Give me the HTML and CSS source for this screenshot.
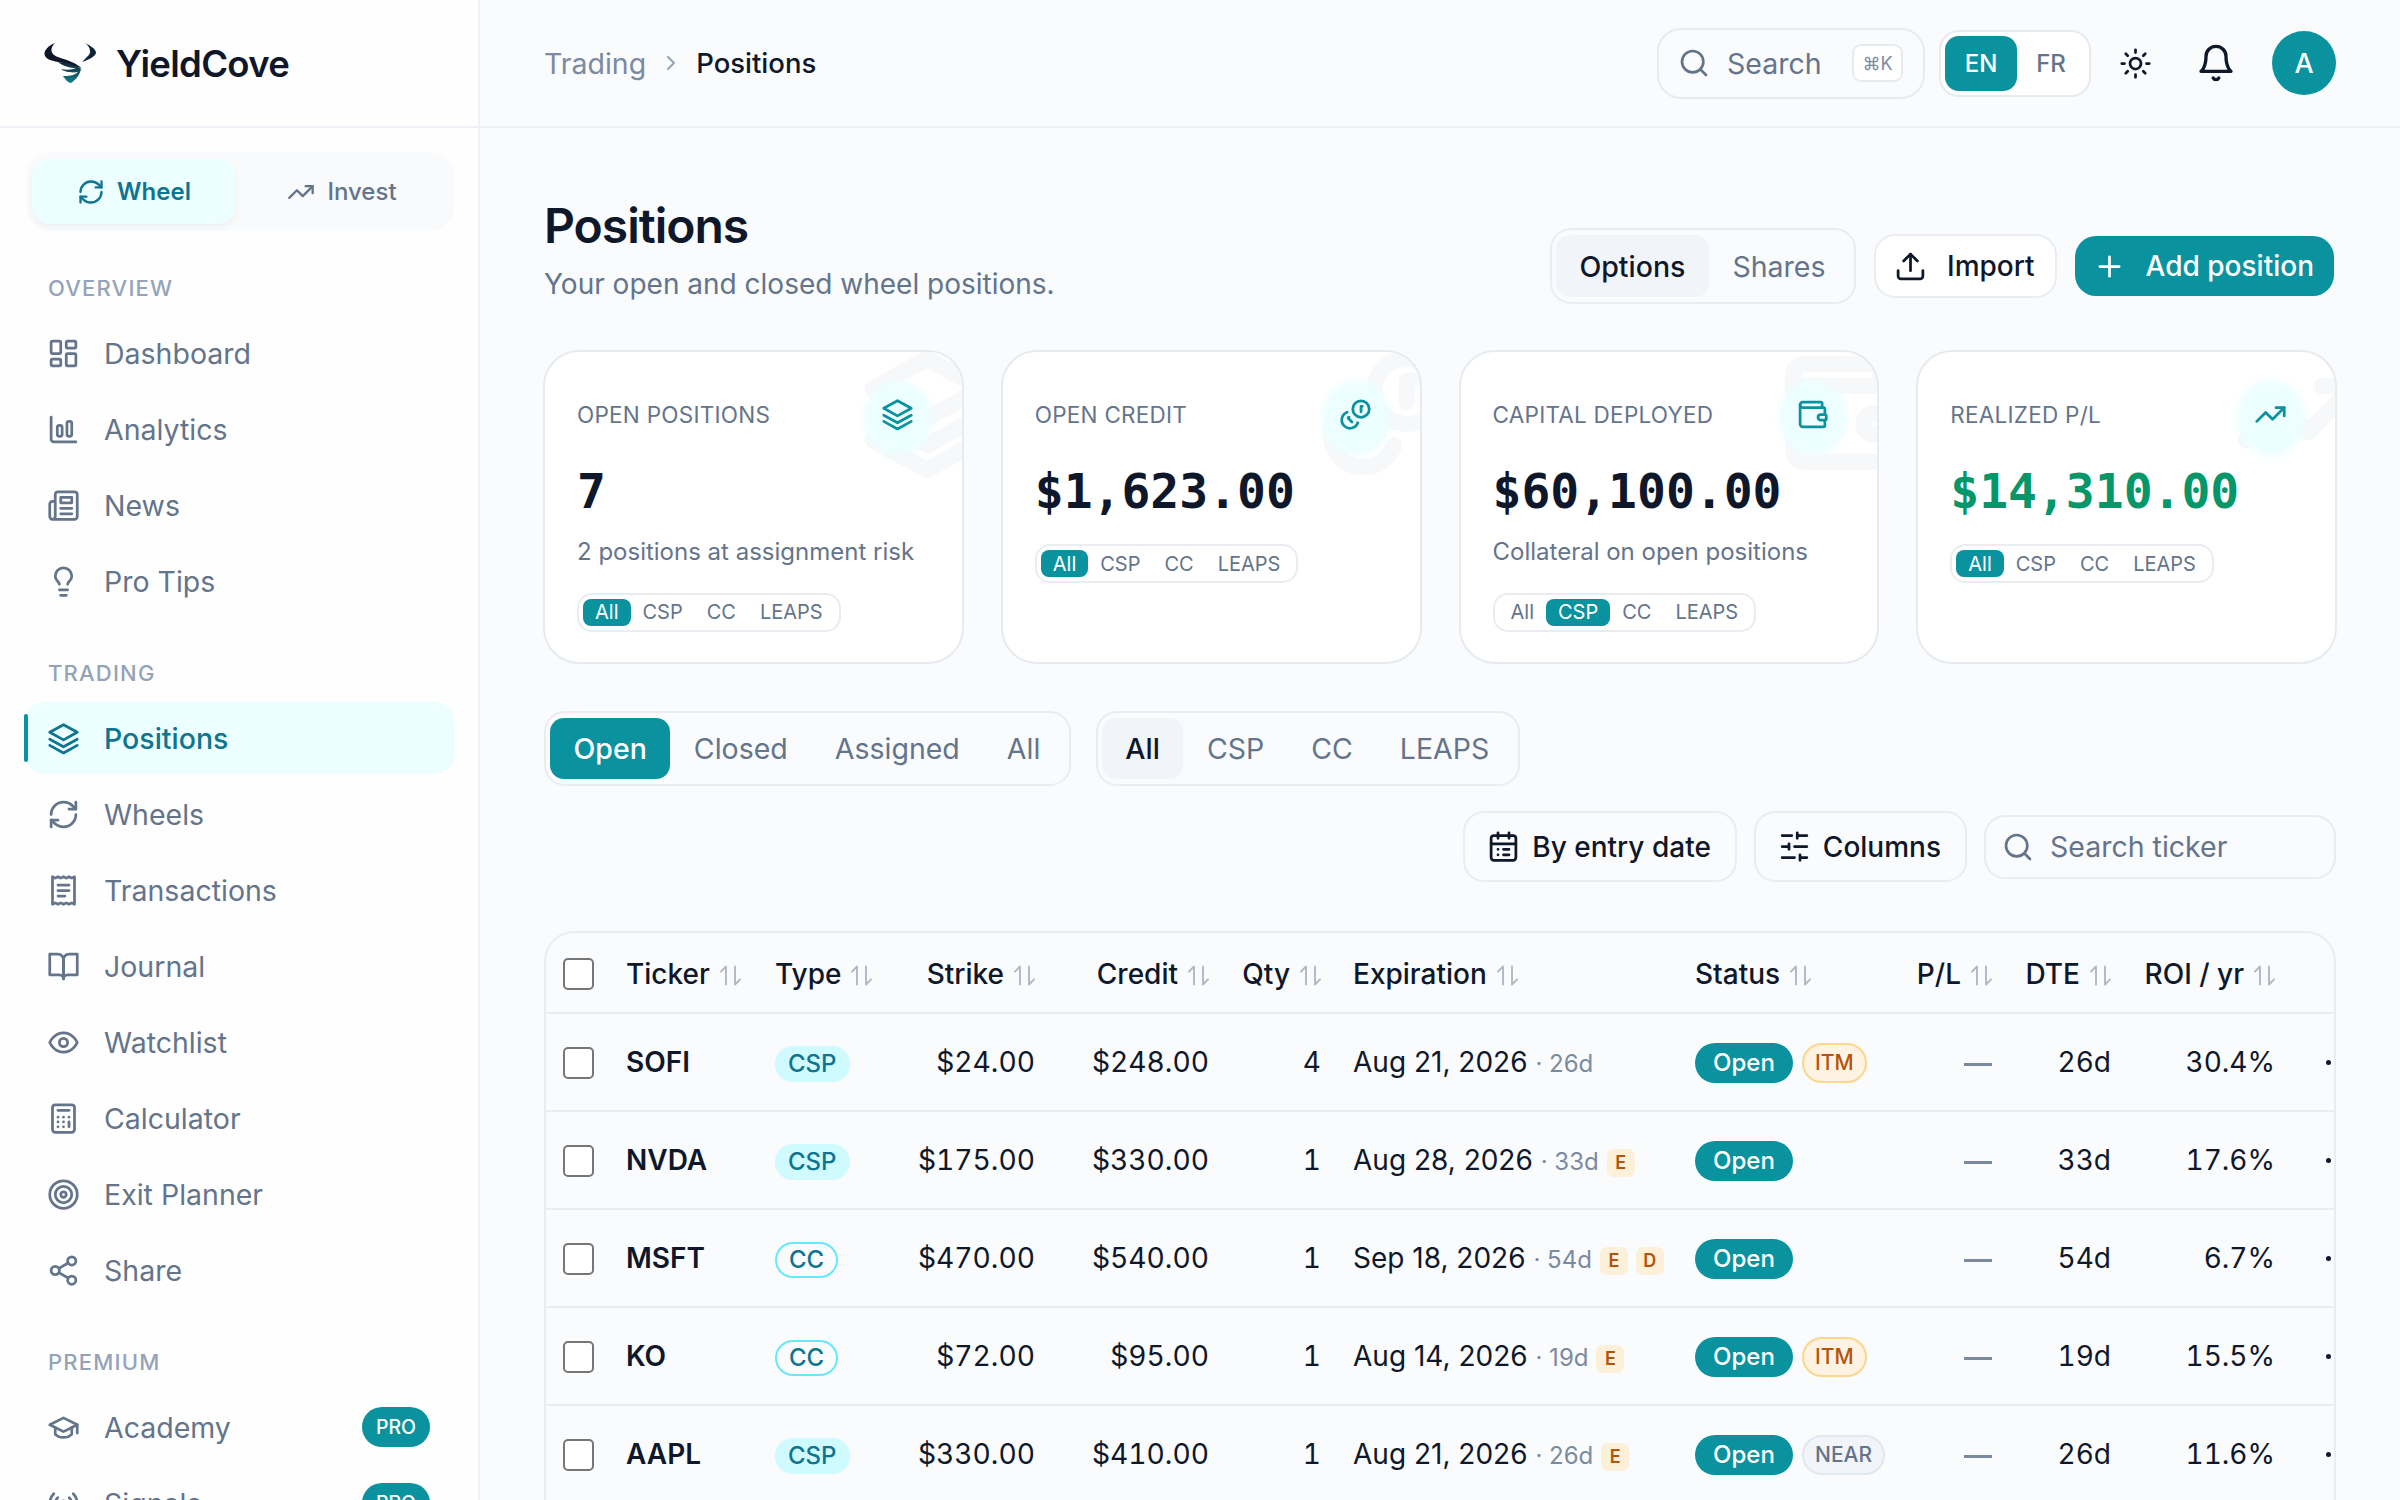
FILE: index.html
```html
<!DOCTYPE html>
<html lang="en">

<head>
    <meta charset="UTF-8">
    <title>Positions - YieldCove</title>
    <link rel="stylesheet" href="styles.css">
</head>

<body>
    <svg class="sprite" xmlns="http://www.w3.org/2000/svg">
        <symbol id="i-refresh" viewBox="0 0 24 24"><path d="M3 12a9 9 0 0 1 9-9 9.75 9.75 0 0 1 6.74 2.74L21 8"/><path d="M21 3v5h-5"/><path d="M21 12a9 9 0 0 1-9 9 9.75 9.75 0 0 1-6.74-2.74L3 16"/><path d="M8 16H3v5"/></symbol>
        <symbol id="i-trend" viewBox="0 0 24 24"><path d="M2 17l6.5-6.5 5 5L22 7"/><path d="M16 7h6v6"/></symbol>
        <symbol id="i-dashboard" viewBox="0 0 24 24"><rect x="3" y="3" width="7" height="9" rx="1"/><rect x="14" y="3" width="7" height="5" rx="1"/><rect x="14" y="12" width="7" height="9" rx="1"/><rect x="3" y="16" width="7" height="5" rx="1"/></symbol>
        <symbol id="i-analytics" viewBox="0 0 24 24"><path d="M3 3v16a2 2 0 0 0 2 2h16"/><rect x="7.5" y="9" width="3.5" height="8" rx="1.5"/><rect x="14.5" y="6" width="3.5" height="11" rx="1.5"/></symbol>
        <symbol id="i-news" viewBox="0 0 24 24"><path d="M4 22h16a2 2 0 0 0 2-2V4a2 2 0 0 0-2-2H8a2 2 0 0 0-2 2v16a2 2 0 0 1-2 2Zm0 0a2 2 0 0 1-2-2v-9c0-1.1.9-2 2-2h2"/><path d="M18 14h-8"/><path d="M18 18h-8"/><path d="M10 6h8v4h-8V6Z"/></symbol>
        <symbol id="i-bulb" viewBox="0 0 24 24"><path d="M15 14c.2-1 .7-1.7 1.5-2.5 1-.9 1.5-2.2 1.5-3.5A6 6 0 0 0 6 8c0 1 .2 2.2 1.5 3.5.7.7 1.3 1.5 1.5 2.5"/><path d="M9 18h6"/><path d="M10 22h4"/></symbol>
        <symbol id="i-layers" viewBox="0 0 24 24"><path d="M12 2 2 7.5 12 13l10-5.500z"/><path d="M2 12.500 12 18l10-5.500"/><path d="M2 17l10 5.500L22 17"/></symbol>
        <symbol id="i-receipt" viewBox="0 0 24 24"><path d="M4 2v20l2-1 2 1 2-1 2 1 2-1 2 1 2-1 2 1V2l-2 1-2-1-2 1-2-1-2 1-2-1-2 1Z"/><path d="M8 8h8"/><path d="M8 12h8"/><path d="M8 16h5"/></symbol>
        <symbol id="i-book" viewBox="0 0 24 24"><path d="M2 3h6a4 4 0 0 1 4 4v14a3 3 0 0 0-3-3H2z"/><path d="M22 3h-6a4 4 0 0 0-4 4v14a3 3 0 0 1 3-3h7z"/></symbol>
        <symbol id="i-eye" viewBox="0 0 24 24"><path d="M2 12s3-7 10-7 10 7 10 7-3 7-10 7-10-7-10-7Z"/><circle cx="12" cy="12" r="3"/></symbol>
        <symbol id="i-calc" viewBox="0 0 24 24"><rect x="4" y="2" width="16" height="20" rx="2"/><path d="M8 6h8"/><path d="M8 11h.01M12 11h.01M16 11h.01M8 14.500h.01M12 14.500h.01M8 18h.01M12 18h.01"/><path d="M16 14.500V18"/></symbol>
        <symbol id="i-target" viewBox="0 0 24 24"><circle cx="12" cy="12" r="10"/><circle cx="12" cy="12" r="6"/><circle cx="12" cy="12" r="2"/></symbol>
        <symbol id="i-share" viewBox="0 0 24 24"><circle cx="18" cy="5" r="3"/><circle cx="6" cy="12" r="3"/><circle cx="18" cy="19" r="3"/><path d="M8.590 13.510l6.830 3.980"/><path d="M15.410 6.510l-6.820 3.980"/></symbol>
        <symbol id="i-cap" viewBox="0 0 24 24"><path d="M22 10v6"/><path d="M2 10l10-5 10 5-10 5z"/><path d="M6 12v5c3 3 9 3 12 0v-5"/></symbol>
        <symbol id="i-radio" viewBox="0 0 24 24"><path d="M4.900 19.100C1 15.200 1 8.800 4.900 4.900"/><path d="M7.800 16.200c-2.300-2.300-2.300-6.100 0-8.500"/><circle cx="12" cy="12" r="2"/><path d="M16.200 7.800c2.300 2.300 2.300 6.100 0 8.500"/><path d="M19.100 4.900C23 8.800 23 15.100 19.100 19"/></symbol>
        <symbol id="i-search" viewBox="0 0 24 24"><circle cx="11" cy="11" r="8"/><path d="M21 21l-4.300-4.300"/></symbol>
        <symbol id="i-chevron" viewBox="0 0 24 24"><path d="M9 18l6-6-6-6"/></symbol>
        <symbol id="i-sun" viewBox="0 0 24 24"><circle cx="12" cy="12" r="4"/><path d="M12 2v2M12 20v2M4.930 4.930l1.410 1.410M17.660 17.660l1.410 1.410M2 12h2M20 12h2M6.340 17.660l-1.410 1.410M19.070 4.930l-1.410 1.410"/></symbol>
        <symbol id="i-bell" viewBox="0 0 24 24"><path d="M6 8a6 6 0 0 1 12 0c0 7 3 9 3 9H3s3-2 3-9"/><path d="M10.300 21a1.940 1.940 0 0 0 3.400 0"/></symbol>
        <symbol id="i-upload" viewBox="0 0 24 24"><path d="M21 15v4a2 2 0 0 1-2 2H5a2 2 0 0 1-2-2v-4"/><path d="M17 8l-5-5-5 5"/><path d="M12 3v12"/></symbol>
        <symbol id="i-plus" viewBox="0 0 24 24"><path d="M5 12h14"/><path d="M12 5v14"/></symbol>
        <symbol id="i-calendar" viewBox="0 0 24 24"><rect x="3" y="4" width="18" height="18" rx="2"/><path d="M16 2v4M8 2v4M3 10h18"/><path d="M8 14h.01M12 14h4M8 18h.01M12 18h4"/></symbol>
        <symbol id="i-sliders" viewBox="0 0 24 24"><path d="M21 4h-7M10 4H3M21 12h-9M8 12H3M21 20h-5M12 20H3M14 2v4M8 10v4M16 18v4"/></symbol>
        <symbol id="i-coins" viewBox="0 0 24 24"><circle cx="16" cy="8" r="6"/><path d="M5.910 10.370A6 6 0 1 0 13.660 18"/><path d="M17 6h-1v4"/><path d="M7.290 13.880l-.7.710 2.820 2.820"/></symbol>
        <symbol id="i-wallet" viewBox="0 0 24 24"><path d="M19 7V4a1 1 0 0 0-1-1H5a2 2 0 0 0 0 4h15a1 1 0 0 1 1 1v4h-3a2 2 0 0 0 0 4h3a1 1 0 0 0 1-1v-2a1 1 0 0 0-1-1"/><path d="M3 5v14a2 2 0 0 0 2 2h15a1 1 0 0 0 1-1v-4"/></symbol>
        <symbol id="i-sort" viewBox="0 0 24 24"><path d="M8 20V4L3.500 8.500"/><path d="M16 4v16l4.500-4.500"/></symbol>
    </svg>

    <div class="app">
        <aside class="sidebar">
            <div class="brand">
                <svg class="logo" viewBox="0 0 52 40">
                    <defs>
                        <linearGradient id="logohead" x1="0" y1="0" x2="0" y2="1">
                            <stop offset="0" stop-color="#0f2338"/>
                            <stop offset="1" stop-color="#12808c"/>
                        </linearGradient>
                    </defs>
                    <path fill="#0f172a" d="M11 0C3 3-1 9 1 13c3 6 15 5 29 10 4 1 8 2 9 4-5-7-17-10-25-13C7 12 5 6 11 0Z"/>
                    <path fill="#0f2338" d="M41 0c6 3 11 6 11 10-1 4-8 7-14 9 5-5 9-8 8-11 0-3-2-6-5-8Z"/>
                    <path fill="url(#logohead)" d="M14 19c8 1 18 3 23 7-1 5-4 10-10 14-3 0-6-4-8-7 5 0 11 0 15-4-6 1-14 0-17-3 5 1 11 1 15-1-6 0-13-2-18-6Z"/>
                </svg>
                <span class="brandname">YieldCove</span>
            </div>

            <div class="modeswitch">
                <a class="modebtn modeactive"><svg class="ico modeico"><use href="#i-refresh"/></svg>Wheel</a>
                <a class="modebtn"><svg class="ico modeico"><use href="#i-trend"/></svg>Invest</a>
            </div>

            <div class="navlabel">OVERVIEW</div>
            <nav class="navgroup">
                <a class="navitem"><svg class="ico navico"><use href="#i-dashboard"/></svg>Dashboard</a>
                <a class="navitem"><svg class="ico navico"><use href="#i-analytics"/></svg>Analytics</a>
                <a class="navitem"><svg class="ico navico"><use href="#i-news"/></svg>News</a>
                <a class="navitem"><svg class="ico navico"><use href="#i-bulb"/></svg>Pro Tips</a>
            </nav>

            <div class="navlabel">TRADING</div>
            <nav class="navgroup">
                <a class="navitem navactive"><svg class="ico navico"><use href="#i-layers"/></svg>Positions</a>
                <a class="navitem"><svg class="ico navico"><use href="#i-refresh"/></svg>Wheels</a>
                <a class="navitem"><svg class="ico navico"><use href="#i-receipt"/></svg>Transactions</a>
                <a class="navitem"><svg class="ico navico"><use href="#i-book"/></svg>Journal</a>
                <a class="navitem"><svg class="ico navico"><use href="#i-eye"/></svg>Watchlist</a>
                <a class="navitem"><svg class="ico navico"><use href="#i-calc"/></svg>Calculator</a>
                <a class="navitem"><svg class="ico navico"><use href="#i-target"/></svg>Exit Planner</a>
                <a class="navitem"><svg class="ico navico"><use href="#i-share"/></svg>Share</a>
            </nav>

            <div class="navlabel">PREMIUM</div>
            <nav class="navgroup">
                <a class="navitem"><svg class="ico navico"><use href="#i-cap"/></svg>Academy<span class="probadge">PRO</span></a>
                <a class="navitem"><svg class="ico navico"><use href="#i-radio"/></svg>Signals<span class="probadge">PRO</span></a>
            </nav>
        </aside>

        <div class="mainarea">
            <header class="topbar">
                <div class="crumbs">
                    <span class="crumbmuted">Trading</span>
                    <svg class="ico crumbico"><use href="#i-chevron"/></svg>
                    <span class="crumbcurrent">Positions</span>
                </div>
                <div class="toptools">
                    <div class="topsearch">
                        <svg class="ico searchico"><use href="#i-search"/></svg>
                        <span class="topsearchtext">Search</span>
                        <span class="kbd">⌘K</span>
                    </div>
                    <div class="langswitch">
                        <span class="langbtn langactive">EN</span>
                        <span class="langbtn">FR</span>
                    </div>
                    <svg class="ico sunico"><use href="#i-sun"/></svg>
                    <svg class="ico bellico"><use href="#i-bell"/></svg>
                    <div class="avatar">A</div>
                </div>
            </header>

            <main class="content">
                <div class="pagehead">
                    <div>
                        <h1 class="pagetitle">Positions</h1>
                        <p class="pagesub">Your open and closed wheel positions.</p>
                    </div>
                    <div class="pageactions">
                        <div class="seg kindseg">
                            <span class="segbtn segsoft">Options</span>
                            <span class="segbtn">Shares</span>
                        </div>
                        <a class="btn importbtn"><svg class="ico btnico"><use href="#i-upload"/></svg>Import</a>
                        <a class="btn addbtn"><svg class="ico btnico"><use href="#i-plus"/></svg>Add position</a>
                    </div>
                </div>

                <section class="statgrid">
                    <div class="statcard">
                        <svg class="ico watermark"><use href="#i-layers"/></svg>
                        <div class="bubble"></div>
                        <svg class="ico statico"><use href="#i-layers"/></svg>
                        <div class="statlabel">OPEN POSITIONS</div>
                        <div class="statvalue">7</div>
                        <div class="statsub">2 positions at assignment risk</div>
                        <div class="minipill"><span class="minibtn miniactive">All</span><span class="minibtn">CSP</span><span class="minibtn">CC</span><span class="minibtn">LEAPS</span></div>
                    </div>
                    <div class="statcard">
                        <svg class="ico watermark"><use href="#i-coins"/></svg>
                        <div class="bubble"></div>
                        <svg class="ico statico"><use href="#i-coins"/></svg>
                        <div class="statlabel">OPEN CREDIT</div>
                        <div class="statvalue">$1,623.00</div>
                        <div class="minipill"><span class="minibtn miniactive">All</span><span class="minibtn">CSP</span><span class="minibtn">CC</span><span class="minibtn">LEAPS</span></div>
                    </div>
                    <div class="statcard">
                        <svg class="ico watermark"><use href="#i-wallet"/></svg>
                        <div class="bubble"></div>
                        <svg class="ico statico"><use href="#i-wallet"/></svg>
                        <div class="statlabel">CAPITAL DEPLOYED</div>
                        <div class="statvalue">$60,100.00</div>
                        <div class="statsub">Collateral on open positions</div>
                        <div class="minipill"><span class="minibtn">All</span><span class="minibtn miniactive">CSP</span><span class="minibtn">CC</span><span class="minibtn">LEAPS</span></div>
                    </div>
                    <div class="statcard">
                        <svg class="ico watermark"><use href="#i-trend"/></svg>
                        <div class="bubble"></div>
                        <svg class="ico statico"><use href="#i-trend"/></svg>
                        <div class="statlabel">REALIZED P/L</div>
                        <div class="statvalue statgreen">$14,310.00</div>
                        <div class="minipill"><span class="minibtn miniactive">All</span><span class="minibtn">CSP</span><span class="minibtn">CC</span><span class="minibtn">LEAPS</span></div>
                    </div>
                </section>

                <div class="filterrow">
                    <div class="seg">
                        <span class="segbtn segteal">Open</span>
                        <span class="segbtn">Closed</span>
                        <span class="segbtn">Assigned</span>
                        <span class="segbtn">All</span>
                    </div>
                    <div class="seg">
                        <span class="segbtn segsoft">All</span>
                        <span class="segbtn">CSP</span>
                        <span class="segbtn">CC</span>
                        <span class="segbtn">LEAPS</span>
                    </div>
                </div>

                <div class="toolrow">
                    <a class="btn toolbtn"><svg class="ico btnico"><use href="#i-calendar"/></svg>By entry date</a>
                    <a class="btn toolbtn"><svg class="ico btnico"><use href="#i-sliders"/></svg>Columns</a>
                    <div class="tickersearch"><svg class="ico searchico"><use href="#i-search"/></svg>Search ticker</div>
                </div>

                <div class="tablewrap">
                    <table class="postable">
                        <colgroup>
                            <col class="colcheck"><col class="colticker"><col class="coltype"><col class="colstrike"><col class="colcredit"><col class="colqty"><col class="colexp"><col class="colstatus"><col class="colpl"><col class="coldte"><col class="colroi"><col class="colmore">
                        </colgroup>
                        <thead>
                            <tr>
                                <th><span class="check"></span></th>
                                <th>Ticker<svg class="ico sortico"><use href="#i-sort"/></svg></th>
                                <th>Type<svg class="ico sortico"><use href="#i-sort"/></svg></th>
                                <th class="num">Strike<svg class="ico sortico"><use href="#i-sort"/></svg></th>
                                <th class="num">Credit<svg class="ico sortico"><use href="#i-sort"/></svg></th>
                                <th class="num">Qty<svg class="ico sortico"><use href="#i-sort"/></svg></th>
                                <th>Expiration<svg class="ico sortico"><use href="#i-sort"/></svg></th>
                                <th>Status<svg class="ico sortico"><use href="#i-sort"/></svg></th>
                                <th class="num">P/L<svg class="ico sortico"><use href="#i-sort"/></svg></th>
                                <th class="num">DTE<svg class="ico sortico"><use href="#i-sort"/></svg></th>
                                <th class="num">ROI / yr<svg class="ico sortico"><use href="#i-sort"/></svg></th>
                                <th></th>
                            </tr>
                        </thead>
                        <tbody>
                            <tr>
                                <td><span class="check"></span></td>
                                <td class="ticker">SOFI</td>
                                <td><span class="kind kindcsp">CSP</span></td>
                                <td class="num money">$24.00</td>
                                <td class="num money">$248.00</td>
                                <td class="num">4</td>
                                <td>Aug 21, 2026 <span class="dtemeta">· 26d</span></td>
                                <td><span class="status">Open</span><span class="flag flagitm">ITM</span></td>
                                <td class="num"><span class="dash"></span></td>
                                <td class="num">26d</td>
                                <td class="num">30.4%</td>
                                <td class="more"><span class="moredot"></span></td>
                            </tr>
                            <tr>
                                <td><span class="check"></span></td>
                                <td class="ticker">NVDA</td>
                                <td><span class="kind kindcsp">CSP</span></td>
                                <td class="num money">$175.00</td>
                                <td class="num money">$330.00</td>
                                <td class="num">1</td>
                                <td>Aug 28, 2026 <span class="dtemeta">· 33d</span><span class="evchip">E</span></td>
                                <td><span class="status">Open</span></td>
                                <td class="num"><span class="dash"></span></td>
                                <td class="num">33d</td>
                                <td class="num">17.6%</td>
                                <td class="more"><span class="moredot"></span></td>
                            </tr>
                            <tr>
                                <td><span class="check"></span></td>
                                <td class="ticker">MSFT</td>
                                <td><span class="kind kindcc">CC</span></td>
                                <td class="num money">$470.00</td>
                                <td class="num money">$540.00</td>
                                <td class="num">1</td>
                                <td>Sep 18, 2026 <span class="dtemeta">· 54d</span><span class="evchip">E</span><span class="evchip">D</span></td>
                                <td><span class="status">Open</span></td>
                                <td class="num"><span class="dash"></span></td>
                                <td class="num">54d</td>
                                <td class="num">6.7%</td>
                                <td class="more"><span class="moredot"></span></td>
                            </tr>
                            <tr>
                                <td><span class="check"></span></td>
                                <td class="ticker">KO</td>
                                <td><span class="kind kindcc">CC</span></td>
                                <td class="num money">$72.00</td>
                                <td class="num money">$95.00</td>
                                <td class="num">1</td>
                                <td>Aug 14, 2026 <span class="dtemeta">· 19d</span><span class="evchip">E</span></td>
                                <td><span class="status">Open</span><span class="flag flagitm">ITM</span></td>
                                <td class="num"><span class="dash"></span></td>
                                <td class="num">19d</td>
                                <td class="num">15.5%</td>
                                <td class="more"><span class="moredot"></span></td>
                            </tr>
                            <tr>
                                <td><span class="check"></span></td>
                                <td class="ticker">AAPL</td>
                                <td><span class="kind kindcsp">CSP</span></td>
                                <td class="num money">$330.00</td>
                                <td class="num money">$410.00</td>
                                <td class="num">1</td>
                                <td>Aug 21, 2026 <span class="dtemeta">· 26d</span><span class="evchip">E</span></td>
                                <td><span class="status">Open</span><span class="flag flagnear">NEAR</span></td>
                                <td class="num"><span class="dash"></span></td>
                                <td class="num">26d</td>
                                <td class="num">11.6%</td>
                                <td class="more"><span class="moredot"></span></td>
                            </tr>
                        </tbody>
                    </table>
                </div>
            </main>
        </div>
    </div>
</body>

</html>
```

FILE: styles.css
```css
* {
    margin: 0;
    padding: 0;
    box-sizing: border-box;
}

html,
body {
    width: 100%;
    height: 100%;
    overflow: hidden;
}

body {
    font-family: "Inter", "Liberation Sans", sans-serif;
    font-size: 28.5px;
    color: #0f172a;
    background-color: #f9fbfd;
}

.sprite {
    display: none;
}

.ico {
    display: block;
    flex-shrink: 0;
    fill: none;
    stroke: currentColor;
    stroke-width: 2;
    stroke-linecap: round;
    stroke-linejoin: round;
}

.app {
    display: flex;
    width: 100%;
    height: 100%;
}

/* sidebar */
.sidebar {
    width: 480px;
    height: 100%;
    flex-shrink: 0;
    overflow: hidden;
    background-color: #fefefe;
    border-right: 2px solid #eff2f6;
}

.brand {
    height: 128px;
    display: flex;
    align-items: center;
    padding-left: 44px;
    gap: 20px;
    border-bottom: 2px solid #eef1f5;
}

.logo {
    width: 52px;
    height: 40px;
}

.brandname {
    margin-top: 2px;
    font-size: 36.5px;
    font-weight: 600;
    letter-spacing: -0.7px;
    color: #0f172a;
}

.modeswitch {
    display: flex;
    margin: 24px 24px 42px 26px;
    height: 79px;
    padding: 7px 6px;
    background-color: #f8fafc;
    border-radius: 24px;
}

.modebtn {
    flex: 1;
    display: flex;
    align-items: center;
    justify-content: center;
    gap: 12px;
    font-size: 24px;
    font-weight: 500;
    color: #64748b;
    border-radius: 18px;
}

.modeactive {
    flex: none;
    width: 204px;
    font-weight: 600;
    color: #0e7490;
    background-color: #ecfeff;
    box-shadow: 0 3px 6px rgba(15, 23, 42, 0.04);
}

.modeico {
    width: 28px;
    height: 28px;
}

.navlabel {
    height: 30px;
    margin: 41px 0 14px 48px;
    font-size: 22px;
    line-height: 30px;
    font-weight: 500;
    letter-spacing: 1.2px;
    color: #94a3b8;
}

.navgroup {
    display: flex;
    flex-direction: column;
    gap: 4px;
    margin: 0 23px 0 24px;
}

.navitem {
    position: relative;
    height: 72px;
    flex-shrink: 0;
    display: flex;
    align-items: center;
    gap: 24px;
    padding: 0 25px 0 23px;
    color: #64748b;
    font-size: 28.5px;
    border-radius: 21px;
}

.navico {
    width: 33px;
    height: 33px;
}

.navactive {
    color: #0e7490;
    font-weight: 500;
    background-color: #ecfeff;
}

.navactive::before {
    content: "";
    position: absolute;
    left: 0;
    top: 12px;
    bottom: 12px;
    width: 4px;
    border-radius: 2px;
    background-color: #0b929f;
}

.probadge {
    margin-left: auto;
    height: 40px;
    width: 68px;
    display: flex;
    align-items: center;
    justify-content: center;
    font-size: 19.5px;
    font-weight: 500;
    color: #fff;
    background-color: #0b929f;
    border-radius: 20px;
}

/* top bar */
.mainarea {
    flex: 1;
    min-width: 0;
}

.topbar {
    height: 128px;
    display: flex;
    align-items: center;
    justify-content: space-between;
    padding: 0 64px;
    border-bottom: 2px solid #eef1f5;
}

.crumbs {
    display: flex;
    align-items: center;
    gap: 13px;
}

.crumbmuted {
    color: #7c8aa0;
}

.crumbcurrent {
    font-size: 27.5px;
    font-weight: 500;
}

.crumbico {
    width: 24px;
    height: 24px;
    color: #94a3b8;
}

.toptools {
    display: flex;
    align-items: center;
}

.topsearch {
    width: 268px;
    height: 71px;
    display: flex;
    align-items: center;
    padding: 0 20px 0 19px;
    border: 2px solid #e7ebf0;
    border-radius: 24px;
    color: #64748b;
}

.searchico {
    width: 32px;
    height: 32px;
    color: #64748b;
}

.topsearchtext {
    margin-left: 17px;
}

.kbd {
    margin-left: auto;
    width: 51px;
    height: 38px;
    display: flex;
    align-items: center;
    justify-content: center;
    font-size: 18px;
    color: #7c8aa0;
    background-color: #fff;
    border: 2px solid #e7ebf0;
    border-radius: 9px;
}

.langswitch {
    display: flex;
    width: 152px;
    height: 67px;
    margin-left: 14px;
    padding: 4px;
    background-color: #fff;
    border: 2px solid #e7ebf0;
    border-radius: 20px;
}

.langbtn {
    flex: 1;
    display: flex;
    align-items: center;
    justify-content: center;
    font-size: 24px;
    font-weight: 500;
    color: #64748b;
    border-radius: 14px;
}

.langactive {
    flex: none;
    width: 72px;
    color: #fff;
    background-color: #0b929f;
}

.sunico {
    width: 33px;
    height: 33px;
    margin-left: 28px;
}

.bellico {
    width: 40px;
    height: 40px;
    margin-left: 44px;
}

.avatar {
    width: 64px;
    height: 64px;
    margin-left: 36px;
    display: flex;
    align-items: center;
    justify-content: center;
    font-size: 27px;
    font-weight: 500;
    color: #fff;
    background-color: #0b929f;
    border-radius: 50%;
}

/* page */
.content {
    padding: 68px 64px 0;
}

.pagehead {
    display: flex;
    justify-content: space-between;
    align-items: flex-end;
    margin-bottom: 46px;
}

.pagetitle {
    font-size: 48px;
    line-height: 60px;
    font-weight: 600;
    letter-spacing: -1px;
}

.pagesub {
    margin-top: 8px;
    line-height: 40px;
    font-size: 28px;
    color: #64748b;
}

.pageactions {
    display: flex;
    align-items: center;
    gap: 18px;
    margin-right: 2px;
}

.seg {
    display: flex;
    align-items: stretch;
    padding: 5px 5px 5px 4px;
    height: 75px;
    border: 2px solid #e9edf2;
    border-radius: 21px;
}

.kindseg {
    height: 76px;
}

.segbtn {
    display: flex;
    align-items: center;
    padding: 0 23.5px;
    color: #64748b;
    border-radius: 14px;
}

.segsoft {
    color: #0f172a;
    font-weight: 500;
    background-color: #f1f5f9;
}

.segteal {
    color: #fff;
    font-weight: 500;
    background-color: #0b929f;
}

.btn {
    display: flex;
    align-items: center;
    font-size: 28px;
    font-weight: 500;
    border-radius: 21px;
}

.btnico {
    width: 33px;
    height: 33px;
}

.importbtn {
    height: 64px;
    padding: 0 20px 0 18px;
    gap: 20px;
    background-color: #fff;
    border: 2px solid #e9edf2;
}

.addbtn {
    height: 60px;
    padding: 0 20px 0 18px;
    gap: 20px;
    color: #fff;
    background-color: #0b929f;
}

/* stat cards */
.statgrid {
    display: grid;
    grid-template-columns: repeat(4, 1fr);
    gap: 37px;
    height: 314px;
    margin: 0 -1px;
}

.statcard {
    position: relative;
    overflow: hidden;
    padding: 46px 32px 0;
    background-color: #fff;
    border: 2px solid #e7ebf0;
    border-radius: 36px;
}

.watermark {
    position: absolute;
    top: -4px;
    right: -30px;
    width: 130px;
    height: 130px;
    color: #64748b;
    opacity: 0.05;
    stroke-width: 3;
}

.bubble {
    position: absolute;
    top: 28px;
    right: 30px;
    width: 68px;
    height: 76px;
    border-radius: 50%;
    background-color: #ecfeff;
    filter: blur(3px);
}

.statico {
    position: absolute;
    top: 46px;
    right: 48px;
    width: 33px;
    height: 33px;
    color: #0b929f;
}

.statlabel {
    position: relative;
    font-size: 22.5px;
    line-height: 34px;
    letter-spacing: 0.25px;
    color: #64748b;
}

.statvalue {
    margin-top: 24px;
    font-family: "DejaVu Sans Mono", "Liberation Mono", monospace;
    font-size: 48px;
    line-height: 70px;
    font-weight: 700;
    color: #0f172a;
}

.statgreen {
    color: #059669;
}

.statsub {
    margin: 8px 0 21px;
    line-height: 36px;
    font-size: 24px;
    color: #64748b;
}

.minipill {
    display: inline-flex;
    margin-top: 18px;
    height: 39px;
    padding: 4px;
    border: 2px solid #e9edf2;
    border-radius: 15px;
}

.statsub + .minipill {
    margin-top: 0;
}

.minibtn {
    display: flex;
    align-items: center;
    padding: 0 12px;
    font-size: 20px;
    color: #64748b;
    border-radius: 8px;
}

.miniactive {
    color: #fff;
    background-color: #0b929f;
}

/* filters */
.filterrow {
    display: flex;
    gap: 25px;
    margin-top: 47px;
}

.toolrow {
    display: flex;
    align-items: center;
    justify-content: flex-end;
    gap: 17px;
    margin-top: 25px;
}

.toolbtn {
    height: 71px;
    padding: 0 24px 0 22px;
    gap: 12px;
    border: 2px solid #e9edf2;
}

.tickersearch {
    width: 352px;
    height: 64px;
    display: flex;
    align-items: center;
    gap: 16px;
    padding: 0 14px 0 16px;
    color: #64748b;
    border: 2px solid #e9edf2;
    border-radius: 21px;
}

/* table */
.tablewrap {
    margin-top: 49px;
    height: 700px;
    overflow: hidden;
    border: 2px solid #e9edf2;
    border-bottom: none;
    border-radius: 30px 30px 0 0;
}

.postable {
    width: 1788px;
    table-layout: fixed;
    border-collapse: collapse;
}

.colcheck { width: 64px; }
.colticker { width: 149px; }
.coltype { width: 150px; }
.colstrike { width: 142px; }
.colcredit { width: 174px; }
.colqty { width: 112px; }
.colexp { width: 342px; }
.colstatus { width: 221px; }
.colpl { width: 108px; }
.coldte { width: 119px; }
.colroi { width: 164px; }
.colmore { width: 43px; }

.postable th {
    height: 80px;
    padding: 2px 16px 0;
    text-align: left;
    font-size: 28px;
    font-weight: 500;
    white-space: nowrap;
    border-bottom: 2px solid #e9edf2;
}

.postable th.num {
    text-align: right;
}

.postable td {
    height: 98px;
    padding: 0 16px;
    font-size: 28px;
    white-space: nowrap;
    border-bottom: 2px solid #e9edf2;
}

.postable td.num {
    text-align: right;
    font-variant-numeric: tabular-nums;
}

.postable td.money {
    padding-left: 0;
    font-size: 28.2px;
}

.sortico {
    display: inline-block;
    vertical-align: -5px;
    width: 27px;
    height: 27px;
    margin: 0 -3px 0 7px;
    color: #b0b8c4;
    stroke-width: 1.7;
}

.check {
    display: block;
    width: 31px;
    height: 32px;
    margin: 1px 0 0 1px;
    background-color: #fff;
    border: 2px solid #767676;
    border-radius: 5px;
}

.ticker {
    font-weight: 600;
}

.kind {
    display: inline-block;
    vertical-align: -2px;
    height: 36px;
    padding: 0 13px;
    font-size: 24px;
    line-height: 36px;
    font-weight: 500;
    color: #0e7490;
    border-radius: 18px;
}

.kindcsp {
    background-color: #cffafe;
}

.kindcc {
    padding: 0 12px;
    line-height: 32px;
    border: 2px solid #67e8f9;
}

.dtemeta {
    font-size: 24px;
    color: #7c8aa0;
}

.evchip {
    display: inline-block;
    vertical-align: 1px;
    width: 28px;
    height: 28px;
    margin-left: 8px;
    text-align: center;
    font-size: 18px;
    line-height: 28px;
    font-weight: 600;
    color: #b45309;
    background-color: #fdf0d9;
    border-radius: 7px;
}

.status {
    display: inline-block;
    vertical-align: top;
    margin-top: 1px;
    height: 40px;
    width: 98px;
    text-align: center;
    font-size: 24px;
    line-height: 40px;
    font-weight: 500;
    color: #fff;
    background-color: #0b929f;
    border-radius: 20px;
}

.flag {
    display: inline-block;
    vertical-align: top;
    margin: 1px 0 0 9px;
    height: 40px;
    padding: 0 11px;
    font-size: 21px;
    line-height: 36px;
    font-weight: 500;
    border-radius: 20px;
}

.flagitm {
    color: #b45309;
    background-color: #fef3e2;
    border: 2px solid #fcd68a;
}

.flagnear {
    color: #64748b;
    background-color: #f1f5f9;
    border: 2px solid #e2e8f0;
}

.dash {
    display: inline-block;
    width: 28px;
    height: 3px;
    vertical-align: middle;
    background-color: #7c8aa0;
}

.more {
    overflow: hidden;
}

.moredot {
    display: block;
    width: 5px;
    height: 5px;
    margin-left: 19px;
    border-radius: 50%;
    background-color: #0f172a;
}
```
